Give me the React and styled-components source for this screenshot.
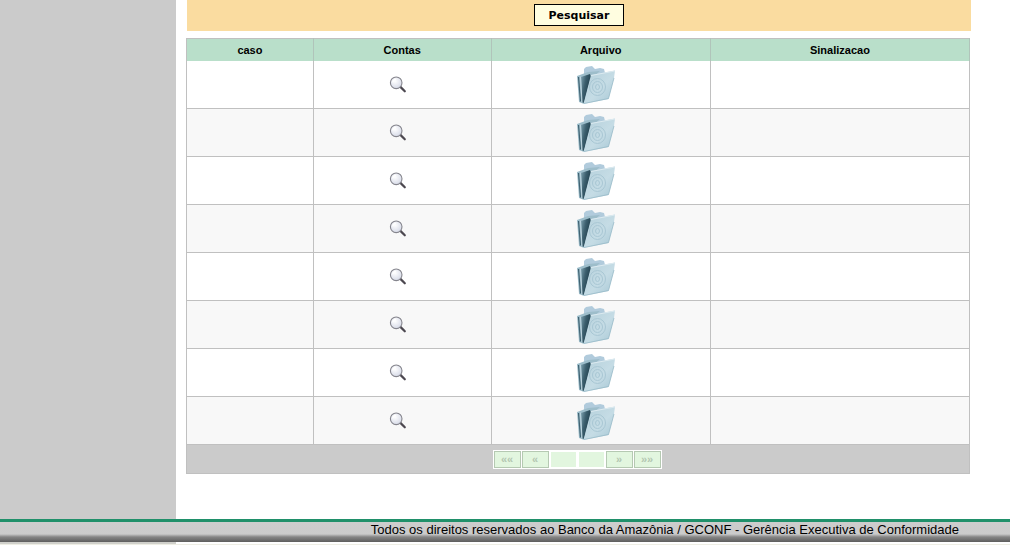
import React from 'react';
import styled, { createGlobalStyle } from 'styled-components';

const GlobalStyle = createGlobalStyle`
  body {
    margin: 0;
    background: #fff;
    color: #000;
    font-family: 'Liberation Sans', Arial, sans-serif;
  }
`;

const Columns = styled.div`
  display: flex;
`;

const Sidebar = styled.aside`
  flex: 0 0 176px;
  background: #cbcbcb;
`;

const Content = styled.main`
  flex: 1;
  min-width: 0;
  padding: 0 40px 45px 10px;
`;

const SearchBar = styled.form`
  display: flex;
  justify-content: center;
  padding: 4px 0 5px;
  margin: 0 -1px 7px 1px;
  background: #fadca0;
`;

const SearchButton = styled.button`
  width: 90px;
  height: 22px;
  padding: 0;
  border: 1px solid #000;
  border-radius: 0;
  background: #fffde0;
  color: #000;
  font: bold 11px 'DejaVu Sans', Verdana, sans-serif;
`;

const Table = styled.table`
  width: 100%;
  table-layout: fixed;
  border-collapse: collapse;
  border: 1px solid #c0c0c0;
`;

const Col = styled.col`
  width: ${props => props.$width};
`;

const HeadCell = styled.th`
  height: 22px;
  padding: 0;
  border-right: 1px solid #b0c4ba;
  background: #b9dfca;
  font-size: 11px;
  line-height: 22px;
`;

const Row = styled.tr`
  background: #fff;

  &:nth-child(even) {
    background: #f8f8f8;
  }
`;

const Cell = styled.td`
  height: 47px;
  padding: 0 9px 0 0;
  border: 1px solid #c0c0c0;
  text-align: center;
  vertical-align: middle;

  tr:first-child > & {
    border-top: 0;
  }
`;

const IconButton = styled.button`
  display: block;
  margin: 0 auto;
  padding: 0;
  border: 0;
  background: none;
  cursor: pointer;

  svg {
    display: block;
  }
`;

const PagerCell = styled.td`
  height: 28px;
  padding: 0 2px 0 0;
  border: 1px solid #c0c0c0;
  border-top-color: #cbcbcb;
  background: #cbcbcb;
`;

const Pager = styled.nav`
  display: flex;
  gap: 1px;
  width: fit-content;
  margin: 0 auto;
  padding: 1px;
  background: #fff;
`;

const PageButton = styled.button`
  width: 27px;
  height: 17px;
  padding: 0;
  border: 1px solid ${props => (props.$blank ? '#fff' : '#b5c9b2')};
  border-radius: 0;
  background: #e2f6df;
  color: #b3c6b1;
  font: bold 11px/15px 'Liberation Sans', Arial, sans-serif;
`;

const Footer = styled.footer`
  border-top: 3px solid #20906a;
  padding: 0 51px 0 0;
  background: linear-gradient(#cdcdcd 0, #cbcbcb 12px, #858585 15px, #5e5e5e 20px);
  font-size: 13px;
  line-height: 16px;
  height: 20px;
  text-align: right;
`;

const BottomEdge = styled.div`
  height: 2px;
  border-bottom: 1px solid #eeeee4;
  background: linear-gradient(to right, #d0d0cb 176px, #fff 176px);
`;

const MagnifierIcon = () => (
  <svg width="18" height="18" viewBox="0 0 18 18" aria-hidden="true">
    <defs>
      <radialGradient id="lens" cx="0.4" cy="0.35" r="0.7">
        <stop offset="0" stopColor="#fff" />
        <stop offset="1" stopColor="#d4d8e6" />
      </radialGradient>
    </defs>
    <path d="M11.4 10.9 15.8 15.3" stroke="#4c4850" strokeWidth="2.2" strokeLinecap="round" />
    <circle cx="7.2" cy="6.8" r="5.8" fill="url(#lens)" stroke="#85858d" strokeWidth="1.1" />
    <path d="M3.7 6.3a3.7 3.7 0 0 1 3.2-3" fill="none" stroke="#fff" strokeWidth="1.2" />
  </svg>
);

const FolderIcon = () => (
  <svg width="40" height="40" viewBox="0 0 40 40" aria-hidden="true">
    <defs>
      <linearGradient id="front" x1="0" y1="0" x2="1" y2="1">
        <stop offset="0" stopColor="#b4d0db" />
        <stop offset="0.55" stopColor="#c5dce5" />
        <stop offset="1" stopColor="#a5c6d4" />
      </linearGradient>
      <linearGradient id="inside" x1="0" y1="0" x2="0.9" y2="0.5">
        <stop offset="0" stopColor="#7fa3b1" />
        <stop offset="0.5" stopColor="#3c5f6e" />
        <stop offset="1" stopColor="#1f3e4c" />
      </linearGradient>
    </defs>
    <path d="M8 9V4l2-2 6-1 3 3 5-1 4 1 1 4-13 6z" fill="#b1cbdc" />
    <path d="M1 11 12 7 24 6 16 13 8 39 3 37z" fill="#9dbdca" />
    <path d="M5 12 14 9 15 12 8 38 6 37z" fill="url(#inside)" />
    <path d="M2.5 12 4.5 36.5" stroke="#3f6271" strokeWidth="1.2" />
    <path d="M4.5 11.5 6 37" stroke="#bdd5df" strokeWidth="1" />
    <path d="M15 10 39 5.5 38 13 32.5 34 7.5 39z" fill="url(#front)" />
    <path d="M15 10.5 39 6" fill="none" stroke="#dceaf0" strokeWidth="1" />
    <path d="M8 38.5 32.5 33.5 38 13" fill="none" stroke="#98bac8" strokeWidth="0.8" />
    <g fill="none" stroke="#a9c7d4" strokeWidth="1">
      <ellipse cx="21.5" cy="22" rx="8" ry="8.5" />
      <ellipse cx="21.5" cy="22" rx="5" ry="5.5" />
      <ellipse cx="21.5" cy="22" rx="2" ry="2.5" />
    </g>
  </svg>
);

const rows = [1, 2, 3, 4, 5, 6, 7, 8];

const App = () => (
  <>
    <GlobalStyle />
    <Columns>
      <Sidebar />
      <Content>
        <SearchBar onSubmit={e => e.preventDefault()}>
          <SearchButton type="submit">Pesquisar</SearchButton>
        </SearchBar>
        <Table>
          <colgroup>
            <Col $width="16.2%" />
            <Col $width="22.7%" />
            <Col $width="28%" />
            <Col $width="33.1%" />
          </colgroup>
          <thead>
            <tr>
              <HeadCell>caso</HeadCell>
              <HeadCell>Contas</HeadCell>
              <HeadCell>Arquivo</HeadCell>
              <HeadCell>Sinalizacao</HeadCell>
            </tr>
          </thead>
          <tbody>
            {rows.map(id => (
              <Row key={id}>
                <Cell />
                <Cell>
                  <IconButton type="button" aria-label="Contas"><MagnifierIcon /></IconButton>
                </Cell>
                <Cell>
                  <IconButton type="button" aria-label="Arquivo"><FolderIcon /></IconButton>
                </Cell>
                <Cell />
              </Row>
            ))}
          </tbody>
          <tfoot>
            <tr>
              <PagerCell colSpan={4}>
                <Pager>
                  <PageButton type="button">««</PageButton>
                  <PageButton type="button">«</PageButton>
                  <PageButton type="button" $blank />
                  <PageButton type="button" $blank />
                  <PageButton type="button">»</PageButton>
                  <PageButton type="button">»»</PageButton>
                </Pager>
              </PagerCell>
            </tr>
          </tfoot>
        </Table>
      </Content>
    </Columns>
    <Footer>Todos os direitos reservados ao Banco da Amazônia / GCONF - Gerência Executiva de Conformidade</Footer>
    <BottomEdge />
  </>
);

export default App;
